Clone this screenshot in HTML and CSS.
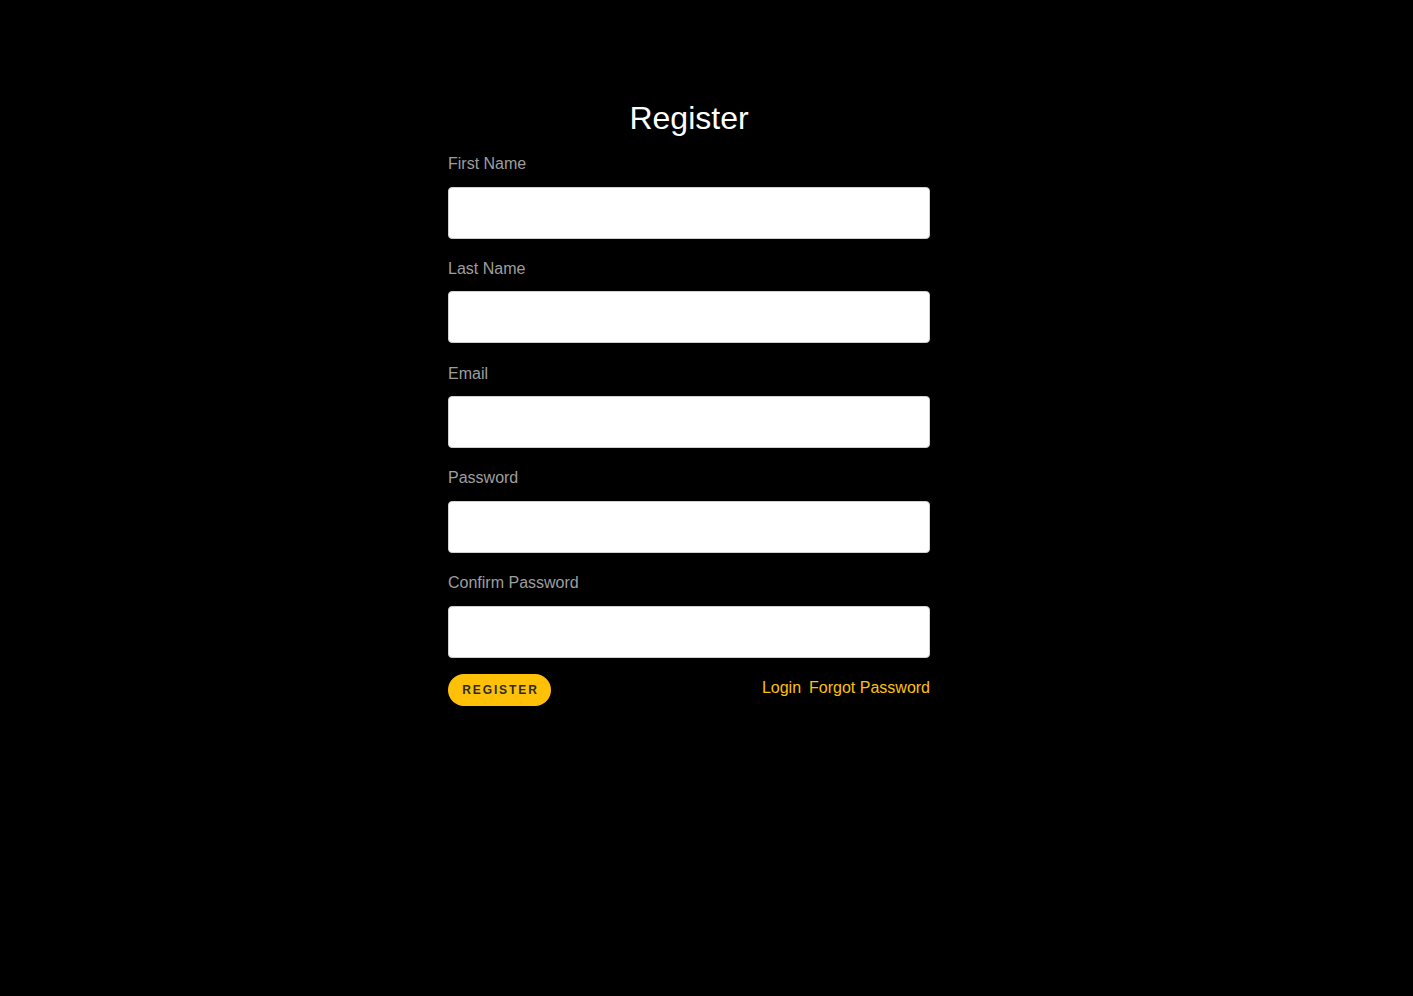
FILE: index.html
```html
<!DOCTYPE html>
<html>
<head>
<meta charset="utf-8">
<link rel="stylesheet" href="styles.css">
</head>
<body>
<main class="page">
  <form class="form">
    <h1 class="title">Register</h1>
    <label class="label">First Name</label>
    <input class="input" type="text">
    <label class="label">Last Name</label>
    <input class="input" type="text">
    <label class="label">Email</label>
    <input class="input" type="email">
    <label class="label">Password</label>
    <input class="input" type="password">
    <label class="label">Confirm Password</label>
    <input class="input input-last" type="password">
    <div class="actions">
      <button class="btn" type="button">REGISTER</button>
      <div class="links">
        <a class="link" href="#">Login</a>
        <a class="link" href="#">Forgot Password</a>
      </div>
    </div>
  </form>
</main>
</body>
</html>
```
FILE: styles.css
```css
html, body {
  margin: 0;
  padding: 0;
  background: #000;
  height: 100%;
}
body {
  font-family: "Liberation Sans", Arial, sans-serif;
  padding-right: 35px;
  box-sizing: border-box;
}
.page {
  padding-top: 99px;
}
.form {
  width: 482px;
  margin: 0 auto;
  display: flex;
  flex-direction: column;
}
.title {
  margin: 0 0 15px;
  font-size: 32px;
  font-weight: normal;
  line-height: 38px;
  color: #fff;
  text-align: center;
}
.label {
  font-size: 16px;
  line-height: 24px;
  color: #9e9e9e;
  margin-bottom: 10.5px;
}
.input {
  height: 52px;
  box-sizing: border-box;
  border: 1px solid #d0d0d0;
  border-radius: 4px;
  background: #fff;
  margin: 0 0 18.25px;
  padding: 0 12px;
  font-size: 16px;
}
.input-last {
  margin-bottom: 16px;
}
.actions {
  display: flex;
  justify-content: space-between;
  align-items: center;
}
.btn {
  width: 103px;
  height: 32px;
  border: none;
  border-radius: 16px;
  background: #ffc107;
  color: #2b2b2b;
  font-family: "Liberation Sans", Arial, sans-serif;
  font-size: 12px;
  font-weight: bold;
  letter-spacing: 1.9px;
  padding: 0 0 0 1.9px;
}
.links {
  display: flex;
  gap: 8px;
  margin-top: -4px;
}
.link {
  color: #ffc107;
  text-decoration: none;
  font-size: 16px;
  line-height: 20px;
}
```
